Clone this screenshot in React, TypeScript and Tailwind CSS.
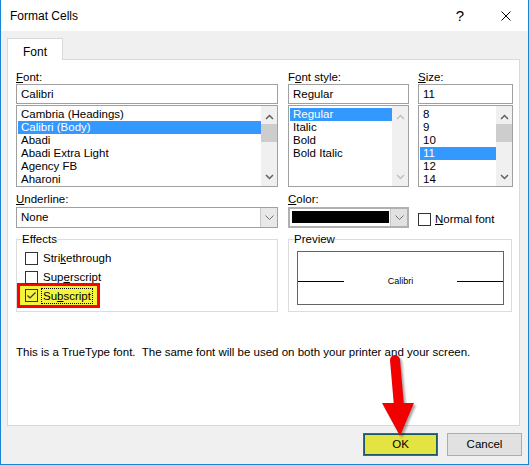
import React from "react";

const Chevron = ({ up, color = "#606060" }: { up?: boolean; color?: string }) => (
  <svg width="9" height="6" viewBox="0 0 9 6">
    <polyline
      points={up ? "1,5 4.5,1.5 8,5" : "1,1 4.5,4.5 8,1"}
      fill="none"
      stroke={color}
      strokeWidth="1.5"
    />
  </svg>
);

const ThinChevron = () => (
  <svg width="9" height="5" viewBox="0 0 9 5">
    <polyline points="0.5,0.5 4.5,4.5 8.5,0.5" fill="none" stroke="#707070" strokeWidth="1" />
  </svg>
);

const ScrollBar = ({ disabled }: { disabled?: boolean }) => (
  <div className="flex w-[16px] flex-col bg-[#f0f0f0]">
    <div className="flex h-[17px] items-center justify-center pt-[4px]">
      <Chevron up color={disabled ? "#c0c0c0" : "#606060"} />
    </div>
    <div className="flex-1">
      {!disabled && <div className="mt-[1px] h-[18px] bg-[#cdcdcd]" />}
    </div>
    <div className="flex h-[17px] items-center justify-center pb-[2px]">
      <Chevron color={disabled ? "#c0c0c0" : "#606060"} />
    </div>
  </div>
);

const ListBox = ({ items, selected, disabled }: { items: string[]; selected: number; disabled?: boolean }) => (
  <div className="mt-[1px] flex h-[82px] border border-[#a0a0a0] bg-white">
    <div className="flex-1 pl-px pt-[2px]">
      {items.map((item, i) => (
        <div
          key={item}
          className={
            i === selected
              ? "h-[13px] bg-[#3399ff] pl-[3px] leading-[13px] text-white"
              : "h-[13px] pl-[3px] leading-[13px]"
          }
        >
          {item}
        </div>
      ))}
    </div>
    <ScrollBar disabled={disabled} />
  </div>
);

const Label = ({ k, rest, pre = "" }: { k: string; rest: string; pre?: string }) => (
  <div className="h-[14px] leading-[14px]">
    {pre}
    <u className="underline">{k}</u>
    {rest}
  </div>
);

const Box = ({ checked }: { checked?: boolean }) => (
  <div className="h-[13px] w-[13px] shrink-0 border border-[#333333]">
    {checked && (
      <svg width="11" height="11" viewBox="0 0 11 11">
        <polyline points="1.5,5.5 4,8 9.5,2.5" fill="none" stroke="#333333" strokeWidth="1.2" />
      </svg>
    )}
  </div>
);

export default function App() {
  return (
    <div className="relative flex h-[465px] w-[529px] flex-col border-x border-b border-[#1883d7] bg-[#f0f0f0] font-['Liberation_Sans',Arial,sans-serif] text-[11.5px] text-black">
      {/* Title bar */}
      <div className="flex h-[31px] shrink-0 items-center bg-white text-[12px]">
        <span className="ml-[9px]">Format Cells</span>
        <span className="ml-auto text-[15px] leading-none">?</span>
        <svg className="ml-[37px] mr-[17px]" width="10" height="10" viewBox="0 0 10 10">
          <path d="M0.5 0.5 L9.5 9.5 M9.5 0.5 L0.5 9.5" stroke="#000" strokeWidth="1" />
        </svg>
      </div>

      <div className="flex flex-col px-[6px] pt-[7px]">
        {/* Tab */}
        <div className="relative z-10 -mb-px flex h-[22px] w-[56px] justify-center border border-b-0 border-[#d9d9d9] bg-white pt-[4px] text-[12px]">
          Font
        </div>

        {/* Panel */}
        <div className="h-[367px] w-[513px] border border-[#d9d9d9] bg-white pl-[8px] pt-[10px]">
          <div className="flex">
            <div className="w-[262px]">
              <Label k="F" rest="ont:" />
              <div className="h-[20px] border border-[#a0a0a0] pl-[4px] leading-[18px]">Calibri</div>
              <ListBox
                items={["Cambria (Headings)", "Calibri (Body)", "Abadi", "Abadi Extra Light", "Agency FB", "Aharoni"]}
                selected={1}
              />
            </div>
            <div className="ml-[10px] w-[121px]">
              <Label pre="F" k="o" rest="nt style:" />
              <div className="h-[20px] border border-[#a0a0a0] pl-[4px] leading-[18px]">Regular</div>
              <ListBox items={["Regular", "Italic", "Bold", "Bold Italic"]} selected={0} disabled />
            </div>
            <div className="ml-[9px] w-[95px]">
              <Label k="S" rest="ize:" />
              <div className="h-[20px] border border-[#a0a0a0] pl-[4px] leading-[18px]">11</div>
              <ListBox items={["8", "9", "10", "11", "12", "14"]} selected={3} />
            </div>
          </div>

          <div className="mt-[5px] flex">
            <div className="w-[262px]">
              <Label k="U" rest="nderline:" />
              <div className="mt-[1px] flex h-[21px] border border-[#a0a0a0]">
                <div className="flex-1 pl-[4px] leading-[19px]">None</div>
                <div className="flex w-[17px] items-center justify-center border-l border-[#c8c8c8] bg-[#e8e8e8]">
                  <ThinChevron />
                </div>
              </div>
            </div>
            <div className="ml-[10px] w-[121px]">
              <Label k="C" rest="olor:" />
              <div className="mt-[1px] flex h-[21px] border-2 border-[#b0b0b0]">
                <div className="ml-[2px] mt-[2px] h-[12px] w-[97px] bg-black" />
                <div className="ml-auto flex w-[17px] items-center justify-center border-l border-[#c8c8c8] bg-[#e1e1e1]">
                  <ThinChevron />
                </div>
              </div>
            </div>
            <div className="ml-[9px] mt-[17px] flex h-[21px] w-[95px] items-center">
              <Box />
              <span className="ml-[4px]">
                <u className="underline">N</u>ormal font
              </span>
            </div>
          </div>

          <div className="mt-[2px] flex">
            <fieldset className="h-[80px] w-[262px] border border-[#dcdcdc]">
              <legend className="ml-[5px] h-[14px] leading-[14px]">Effects</legend>
              <div className="mt-[3px] flex h-[19px] items-center pl-[8px]">
                <Box />
                <span className="ml-[5px]">
                  Stri<u className="underline">k</u>ethrough
                </span>
              </div>
              <div className="flex h-[19px] items-center pl-[8px]">
                <Box />
                <span className="ml-[5px]">
                  Sup<u className="underline">e</u>rscript
                </span>
              </div>
              <div className="-mt-[4px] flex h-[25px] w-[83px] items-center border-[3px] border-[#ff0000] bg-[#f4f43c] pl-[5px]">
                <Box checked />
                <span className="ml-[3px] border border-dotted border-black px-[1px] leading-[14px]">
                  Su<u className="underline">b</u>script
                </span>
              </div>
            </fieldset>
            <fieldset className="ml-[10px] h-[80px] w-[224px] border border-[#dcdcdc]">
              <legend className="ml-[5px] h-[14px] leading-[14px]">Preview</legend>
              <div className="ml-[8px] mt-[5px] flex h-[54px] w-[207px] items-center justify-between border border-[#646464] pt-[6px]">
                <div className="h-px w-[46px] bg-black" />
                <span className="text-[9px] leading-[10px]">Calibri</span>
                <div className="h-px w-[46px] bg-black" />
              </div>
            </fieldset>
          </div>

          <div className="mt-[33px] h-[14px] leading-[14px]">
            This is a TrueType font.&nbsp; The same font will be used on both your printer and your screen.
          </div>
        </div>

        {/* Buttons */}
        <div className="mt-[7px] flex justify-end gap-[9px]">
          <button className="h-[23px] w-[75px] border border-[#0078d7] bg-[#e3e342] shadow-[inset_0_0_0_1px_#1a5a6a]">
            OK
          </button>
          <button className="h-[23px] w-[75px] border border-[#adadad] bg-[#e1e1e1]">Cancel</button>
        </div>
      </div>

      {/* Red annotation arrow */}
      <svg
        className="absolute left-[376px] top-[350px] drop-shadow-[2px_2px_1px_rgba(0,0,0,0.35)]"
        width="42"
        height="90"
        viewBox="0 0 42 90"
      >
        <line x1="18" y1="10" x2="22" y2="56" stroke="#f20000" strokeWidth="10" strokeLinecap="round" />
        <polygon points="5,53 37,53 23,86" fill="#f20000" />
      </svg>
    </div>
  );
}
